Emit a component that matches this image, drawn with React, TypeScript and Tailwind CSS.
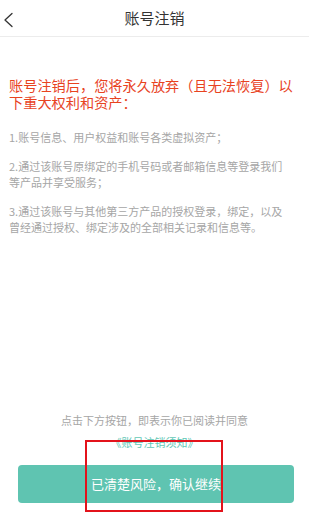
const FONT = { fontFamily: '"Noto Sans CJK SC", "Noto Sans", sans-serif' };

const items = [
  "1.账号信息、用户权益和账号各类虚拟资产；",
  "2.通过该账号原绑定的手机号码或者邮箱信息等登录我们等产品并享受服务；",
  "3.通过该账号与其他第三方产品的授权登录，绑定，以及曾经通过授权、绑定涉及的全部相关记录和信息等。",
];

function BackIcon() {
  return (
    <svg
      width="14"
      height="18"
      viewBox="0 0 14 18"
      fill="none"
      stroke="#333"
      strokeWidth="1.3"
      strokeLinecap="round"
      strokeLinejoin="round"
      aria-hidden="true"
      className="absolute left-[2px] top-[11px]"
    >
      <path d="M10 2.5 L3 9 L10 15.5" />
    </svg>
  );
}

export default function App() {
  return (
    <div
      className="relative flex h-[515px] w-[309px] flex-col overflow-hidden bg-white"
      style={FONT}
    >
      <header className="relative flex h-[37px] shrink-0 items-center justify-center border-b border-[#ececec]">
        <BackIcon />
        <h1 className="text-[15px] text-[#333]">账号注销</h1>
      </header>

      <main className="flex flex-1 flex-col px-[9px] pt-[40px]">
        <p className="text-[14.2px] leading-[17px] text-[#e8431f]">
          账号注销后，您将永久放弃（且无法恢复）以下重大权利和资产：
        </p>
        <div className="mt-[18px] flex flex-col gap-[13px] pr-[14px]">
          {items.map((t) => (
            <p key={t} className="text-[11px] leading-[16px] text-[#a6a6a6]">
              {t}
            </p>
          ))}
        </div>
      </main>

      <footer className="flex flex-col items-center pb-[12px]">
        <p className="text-[11px] leading-[16px] text-[#a6a6a6]">
          点击下方按钮，即表示你已阅读并同意
        </p>
        <a className="mt-[6px] text-[11px] leading-[16px] text-[#63c8b6]">
          《账号注销须知》
        </a>
        <button
          type="button"
          className="ml-[18px] mt-[15px] h-[38px] w-[276px] self-start rounded-[4px] bg-[#5fc4b1] text-[13px] text-white"
        >
          已清楚风险，确认继续
        </button>
      </footer>

      <div className="pointer-events-none absolute left-[85px] top-[440px] h-[72px] w-[138px] border-2 border-[#e3131b]" />
    </div>
  );
}
